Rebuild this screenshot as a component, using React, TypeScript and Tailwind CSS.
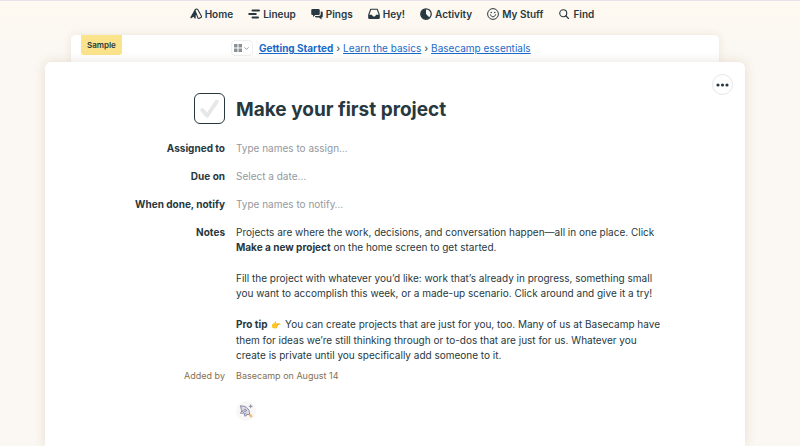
import React from 'react';
import { ChevronDown } from 'lucide-react';

const HomeIcon = () => (
  <svg viewBox="0 0 24 24" className="h-3 w-3" fill="currentColor">
    <path d="M10 2.500 1 18c-.9 1.800.7 3.300 2.300 2.200L7 17.500l2.200 3.200c.7 1 2.200.6 2.200-.6V14L15 9 12.500 3Z" />
    <path
      d="M10.500 3.500c1.200-2 4-2 5.200 0l7 12.500c.6 1.200.2 2.300-.8 2.800l-3.400 1.900c-1 .5-2 .1-2.500-.9L10.500 6.500c-.5-1-.6-2 0-3Z"
      fill="#fefaf1"
      stroke="currentColor"
      strokeWidth="2.200"
    />
    <path d="M7 12c1.500 2 3.500 1.500 5-1" fill="none" stroke="currentColor" strokeWidth="3" />
  </svg>
);

const LineupIcon = () => (
  <svg viewBox="0 0 24 24" className="h-3 w-3" stroke="currentColor" strokeWidth="4" strokeLinecap="round">
    <path d="M9 5h13M2.500 12h13M9 19h11" />
  </svg>
);

const PingsIcon = () => (
  <svg viewBox="0 0 24 24" className="h-3 w-3" fill="currentColor">
    <path d="M3 2h12a2.500 2.500 0 0 1 2.500 2.500v7A2.500 2.500 0 0 1 15 14H8.500L4 18v-4H3a2.500 2.500 0 0 1-2.500-2.500v-7A2.500 2.500 0 0 1 3 2Z" />
    <path d="M19.500 7H21a2.500 2.500 0 0 1 2.500 2.500v7A2.500 2.500 0 0 1 21 19v4l-5-4h-5.500A2.500 2.500 0 0 1 8 16.500V16h7.500a4 4 0 0 0 4-4V7Z" />
  </svg>
);

const HeyIcon = () => (
  <svg viewBox="0 0 24 24" className="h-3 w-3">
    <path
      d="M5.500 2.500h13l4 11V19a2 2 0 0 1-2 2h-17a2 2 0 0 1-2-2v-5.500l4-11Z"
      fill="none"
      stroke="currentColor"
      strokeWidth="2.200"
      strokeLinejoin="round"
    />
    <path d="M1.500 13.500H8c.5 2.300 2 3.500 4 3.500s3.500-1.200 4-3.500h6.500V21h-21v-7.500Z" fill="currentColor" />
  </svg>
);

const ActivityIcon = () => (
  <svg viewBox="0 0 24 24" className="h-3 w-3">
    <circle cx="12" cy="12" r="10.500" fill="none" stroke="currentColor" strokeWidth="2.500" />
    <path d="M12 2a10 10 0 1 0 7 17l-7-7V2Z" fill="currentColor" />
  </svg>
);

const StuffIcon = () => (
  <svg viewBox="0 0 24 24" className="h-3 w-3" fill="none" stroke="currentColor" strokeWidth="2">
    <circle cx="12" cy="12" r="10.800" />
    <path d="M7 13.500c.8 2.700 2.600 4 5 4s4.200-1.300 5-4" strokeLinecap="round" />
    <circle cx="8.500" cy="9" r="1.500" fill="currentColor" stroke="none" />
    <circle cx="15.500" cy="9" r="1.500" fill="currentColor" stroke="none" />
  </svg>
);

const FindIcon = () => (
  <svg viewBox="0 0 24 24" className="h-3 w-3" fill="none" stroke="currentColor" strokeWidth="2.200">
    <circle cx="10.500" cy="10.500" r="7" />
    <path d="m15.500 15.500 5.500 5.500" strokeLinecap="round" />
  </svg>
);

const RocketIcon = () => (
  <svg viewBox="0 0 24 24" className="h-[14px] w-[14px]" fill="none" stroke="#85839e" strokeWidth="1.600" strokeLinejoin="round" strokeLinecap="round">
    <path d="M3 3.500c5.500-.5 9.500 1 12.500 5 2.200 3 3 5.500 2.500 9.500-4 .5-7.500-.5-10.500-3.500C4.500 11.500 3 8.500 3 3.500Z" fill="#dcdbe4" />
    <path d="M5 11.500 2.500 16l5-.5M9 17l1 4 4-2.500" />
    <circle cx="10.500" cy="11" r="2" fill="#fff" />
    <path d="M20 1.500v5M17.500 4h5" />
    <path d="m19 19 2 2" stroke="#f6b765" strokeWidth="4" />
  </svg>
);

const navItems = [
  { label: 'Home', icon: HomeIcon },
  { label: 'Lineup', icon: LineupIcon },
  { label: 'Pings', icon: PingsIcon },
  { label: 'Hey!', icon: HeyIcon },
  { label: 'Activity', icon: ActivityIcon },
  { label: 'My Stuff', icon: StuffIcon },
  { label: 'Find', icon: FindIcon }
];

const fields = [
  { id: 'assigned', label: 'Assigned to', placeholder: 'Type names to assign…' },
  { id: 'due', label: 'Due on', placeholder: 'Select a date…' },
  { id: 'notify', label: 'When done, notify', placeholder: 'Type names to notify…' }
];

const App = () => {
  return (
    <div className="flex min-h-screen flex-col border-t border-[#e6e1ec] bg-linear-to-b from-[#fefaf1] to-[#fbf7f2] to-10% pr-[10px] font-['Inter',sans-serif] text-[10px] leading-[15px] text-[#283840]">
      <nav className="flex h-[34px] justify-center gap-[15px] pt-[5px] pr-[6px]">
        {navItems.map(({ label, icon: Icon }) => (
          <a key={label} href="#" className="flex h-4 items-center gap-[3px] font-semibold">
            <Icon />
            {label}
          </a>
        ))}
      </nav>

      <header className="mx-auto flex h-[27px] w-full max-w-[648px] items-start rounded-t-[5px] bg-white pl-[10px] shadow-[0_0_8px_rgba(120,90,40,0.12)]">
        <span className="rounded-b-[3px] bg-[#fbe38c] px-[6px] py-[2px] text-[8px] leading-4 font-semibold">Sample</span>
        <div className="ml-auto flex items-center pt-[5px]">
          <button aria-label="Project tools" className="mr-[6px] flex h-4 w-[22px] items-center justify-center gap-px rounded-[4px] border border-[#f0f0f0] text-[#8b9297]">
            <svg viewBox="0 0 8 8" className="h-2 w-2" fill="currentColor">
              <path d="M0 0h3.500v3.500H0zM4.500 0H8v3.500H4.500zM0 4.500h3.500V8H0zM4.500 4.500H8V8H4.500z" />
            </svg>
            <ChevronDown size={7} strokeWidth={3} />
          </button>
        </div>
        <div className="flex w-[460px] gap-[3px] pt-[6px]">
          <a href="#" className="font-bold text-[#1b6ac9] underline">Getting Started</a>
          <span>›</span>
          <a href="#" className="text-[#1b6ac9] underline">Learn the basics</a>
          <span>›</span>
          <a href="#" className="text-[#1b6ac9] underline">Basecamp essentials</a>
        </div>
      </header>

      <main className="relative mx-auto w-full max-w-[700px] grow rounded-t-[6px] bg-white pt-[31px] shadow-[0_0_12px_rgba(120,90,40,0.16)]">
        <button aria-label="More options" className="absolute top-3 right-3 flex h-[21px] w-[21px] items-center justify-center rounded-full border border-[#e4e6e7]">
          <svg viewBox="0 0 13 4" className="h-1 w-[13px]" fill="currentColor">
            <circle cx="2" cy="2" r="1.600" />
            <circle cx="6.500" cy="2" r="1.600" />
            <circle cx="11" cy="2" r="1.600" />
          </svg>
        </button>

        <div className="grid grid-cols-[180px_430px] gap-x-[11px]">
          <label className="relative h-[31px] w-[31px] justify-self-end">
            <input type="checkbox" aria-label="Make your first project" className="block h-[31px] w-[31px] appearance-none rounded-[6px] border border-[#283840] bg-white" />
            <svg viewBox="0 0 32 32" className="pointer-events-none absolute inset-0" fill="none" stroke="#e5e7e8" strokeWidth="4" strokeLinecap="round" strokeLinejoin="round">
              <path d="m8.500 17.500 5 6L23.500 9" />
            </svg>
          </label>
          <h1 className="text-[19px] leading-[34px] font-bold">Make your first project</h1>
        </div>

        <div className="mt-[7px] grid grid-cols-[180px_430px] gap-x-[11px]">
          {fields.map((field) => (
            <React.Fragment key={field.id}>
              <label htmlFor={field.id} className="h-7 text-right leading-7 font-bold">{field.label}</label>
              <input id={field.id} placeholder={field.placeholder} className="h-7 bg-transparent leading-7 outline-none placeholder:text-[#93999d]" />
            </React.Fragment>
          ))}

          <h2 className="pt-[7px] text-right font-bold">Notes</h2>
          <div className="flex flex-col gap-4 pt-[7px]">
            <p>
              Projects are where the work, decisions, and conversation happen—all in one place. Click{' '}
              <strong>Make a new project</strong> on the home screen to get started.
            </p>
            <p>
              Fill the project with whatever you’d like: work that’s already in progress, something small you want to
              accomplish this week, or a made-up scenario. Click around and give it a try!
            </p>
            <p>
              <strong>Pro tip</strong> <span className="mx-px text-[8px]">👉</span> You can create projects that are just
              for you, too. Many of us at Basecamp have them for ideas we’re still thinking through or to-dos that are
              just for us. Whatever you create is private until you specifically add someone to it.
            </p>
          </div>

          <span className="pt-[5px] text-right text-[9px] text-[#86704e]">Added by</span>
          <span className="pt-[5px] text-[9px] text-[#86704e]">Basecamp on August 14</span>

          <button aria-label="Add a boost" className="col-start-2 mt-[18px] flex h-5 w-5 items-center justify-center rounded-full bg-[#f8f7f6]">
            <RocketIcon />
          </button>
        </div>
      </main>
    </div>
  );
};

export default App;
